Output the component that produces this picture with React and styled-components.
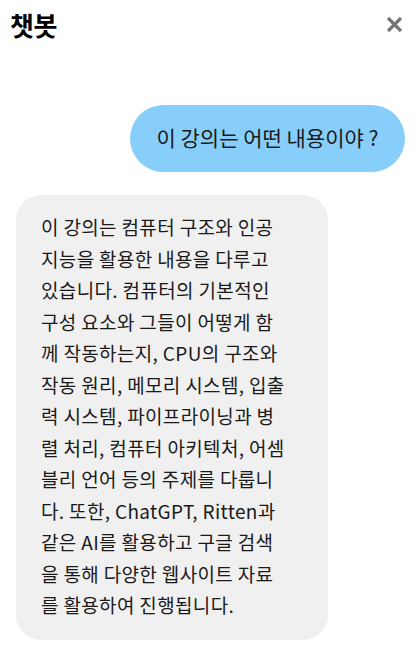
import React from "react";
import styled, { createGlobalStyle } from "styled-components";

const GlobalStyle = createGlobalStyle`
  body {
    margin: 0;
    background: #ffffff;
    font-family: "Noto Sans CJK KR", "Noto Sans", sans-serif;
  }
`;

const answerLines = [
  "이 강의는 컴퓨터 구조와 인공",
  "지능을 활용한 내용을 다루고",
  "있습니다. 컴퓨터의 기본적인",
  "구성 요소와 그들이 어떻게 함",
  "께 작동하는지, CPU의 구조와",
  "작동 원리, 메모리 시스템, 입출",
  "력 시스템, 파이프라이닝과 병",
  "렬 처리, 컴퓨터 아키텍처, 어셈",
  "블리 언어 등의 주제를 다룹니",
  "다. 또한, ChatGPT, Ritten과",
  "같은 AI를 활용하고 구글 검색",
  "을 통해 다양한 웹사이트 자료",
  "를 활용하여 진행됩니다.",
];

const CloseIcon = () => (
  <svg width="17" height="17" viewBox="0 0 17 17">
    <path
      d="M2 2 L15 15 M15 2 L2 15"
      stroke="#777"
      strokeWidth="3.2"
      strokeLinecap="butt"
    />
  </svg>
);

const App = () => {
  return (
    <>
      <GlobalStyle />
      <ChatContainer>
        <Header>
          <Title>챗봇</Title>
          <CloseButton aria-label="닫기">
            <CloseIcon />
          </CloseButton>
        </Header>
        <MessageList>
          <Bubble $mine>이 강의는 어떤 내용이야 ?</Bubble>
          <Bubble>
            {answerLines.map((line) => (
              <Line key={line}>{line}</Line>
            ))}
          </Bubble>
        </MessageList>
      </ChatContainer>
    </>
  );
};

export default App;

const ChatContainer = styled.div`
  width: 418px;
  height: 652px;
  box-sizing: border-box;
  display: flex;
  flex-direction: column;
  background: #fff;
`;

const Header = styled.div`
  display: flex;
  align-items: center;
  justify-content: space-between;
  padding: 6px 15px 0 10px;
  height: 36px;
`;

const Title = styled.h1`
  margin: 0;
  font-size: 26px;
  font-weight: 700;
  color: #000;
  letter-spacing: -0.5px;
`;

const CloseButton = styled.button`
  border: none;
  background: none;
  padding: 0;
  display: flex;
  cursor: pointer;
`;

const MessageList = styled.div`
  display: flex;
  flex-direction: column;
  gap: 23px;
  padding: 63px 13px 0 16px;
`;

const Bubble = styled.div`
  align-self: ${(p) => (p.$mine ? "flex-end" : "flex-start")};
  box-sizing: border-box;
  background: ${(p) => (p.$mine ? "#87cefa" : "#f0f0f0")};
  color: #1a1a1a;
  font-size: ${(p) => (p.$mine ? "21px" : "19px")};
  border-radius: ${(p) => (p.$mine ? "34px" : "25px")};
  padding: ${(p) => (p.$mine ? "17px 10px 19px 10px" : "16px 0 19px 25px")};
  width: ${(p) => (p.$mine ? "275px" : "312px")};
  text-align: ${(p) => (p.$mine ? "center" : "left")};
  line-height: ${(p) => (p.$mine ? "31px" : "31.5px")};
  letter-spacing: ${(p) => (p.$mine ? "0" : "0.35px")};
`;

const Line = styled.div`
  white-space: nowrap;
`;
